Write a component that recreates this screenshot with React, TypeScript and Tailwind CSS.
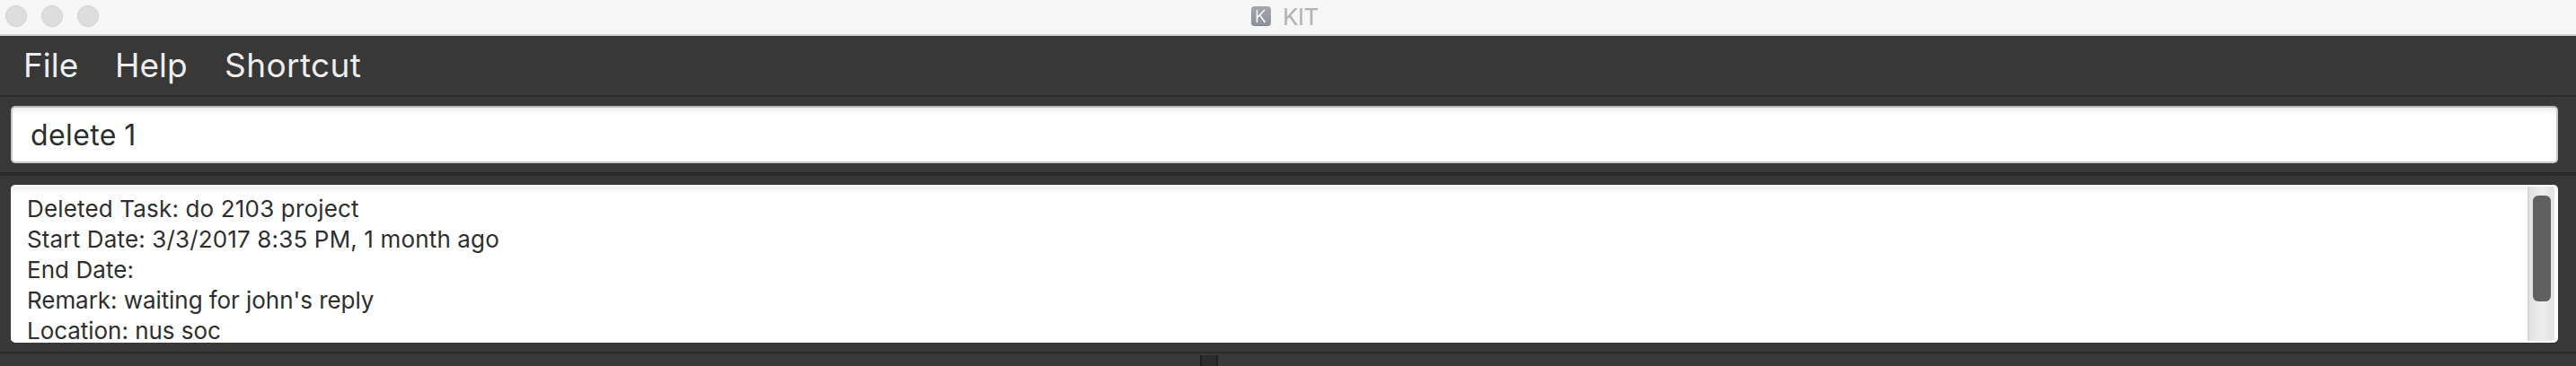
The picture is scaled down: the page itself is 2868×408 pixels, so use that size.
const menus = [
  { label: "File", className: "w-[102px]" },
  { label: "Help", className: "w-[122px]" },
  { label: "Shortcut", className: "tracking-[0.4px]" },
];

const resultLines = [
  { text: "Deleted Task: do 2103 project", className: "tracking-[0.16px]" },
  { text: "Start Date: 3/3/2017 8:35 PM, 1 month ago", className: "tracking-[0.15px]" },
  { text: "End Date:", className: "tracking-[0.05px]" },
  { text: "Remark: waiting for john's reply", className: "tracking-[-0.06px]" },
  { text: "Location: nus soc", className: "tracking-[-0.04px]" },
];

function TitleBar() {
  return (
    <header className="flex h-10 shrink-0 items-start border-b-2 border-[#d4d4d4] bg-[#f6f6f6]">
      <div className="flex w-[1393px] gap-4 pt-1.5 pl-1.5">
        {[0, 1, 2].map((i) => (
          <span key={i} className="size-6 rounded-full border border-[#cecece] bg-[#dddddd]" />
        ))}
      </div>
      <div className="mt-[7px] flex size-[22px] items-center justify-center rounded-[4px] border-b border-[#80828b] bg-linear-to-b from-[#a5a7b0] to-[#8f919b]">
        <svg viewBox="0 0 22 22" className="size-[22px]" fill="none" stroke="#ffffff" strokeWidth="1.5">
          <path d="M6.500 4v14M15 4l-8.200 8.500M9.500 9.700l6 8.300" />
        </svg>
      </div>
      <span className="ml-[13px] text-[26px] leading-[37px] tracking-[-0.5px] text-[#b3b3b3]">KIT</span>
    </header>
  );
}

function MenuBar() {
  return (
    <nav className="flex h-[68px] shrink-0 border-b-2 border-[#2a2a2a] pl-[26px] text-[37px] leading-[66px] text-[#eeeeee]">
      {menus.map((menu) => (
        <span key={menu.label} className={menu.className}>
          {menu.label}
        </span>
      ))}
    </nav>
  );
}

function CommandBox() {
  return (
    <section className="h-[88px] shrink-0 border-b-4 border-[#2a2a2a] pt-2.5 pr-5 pl-3">
      <div className="h-16 rounded-[5px] border-2 border-[#c8c8c8] border-t-[#b8b8b8] bg-linear-to-b from-[#ededed] to-white to-[8px] pl-5 text-[32px] leading-[61px] tracking-[0.4px] [word-spacing:-1px] text-[#2e2e2e]">
        delete 1
      </div>
    </section>
  );
}

function ResultDisplay() {
  return (
    <section className="h-[198px] shrink-0 border-b-2 border-[#2a2a2a] pt-2.5 pr-5 pl-3">
      <div className="flex h-44 overflow-hidden rounded-[5px] border-t-2 border-r-4 border-b-2 border-white bg-white">
        <div className="h-[174px] grow overflow-hidden bg-linear-to-b from-[#ededed] to-white to-[8px] pt-2 pl-[18px] text-[26px] leading-[33.9px] text-[#2e2e2e]">
          {resultLines.map((line) => (
            <p key={line.text} className="whitespace-nowrap">
              <span className={line.className}>{line.text}</span>
            </p>
          ))}
        </div>
        <div className="h-[172px] w-[30px] shrink-0 rounded-r-[3px] border-l-2 border-[#d5d5d5] bg-linear-to-r from-[#e2e2e2] via-[#ededed] to-[#e2e2e2] pt-2.5 pl-1">
          <div className="h-[118px] w-5 rounded-[6px] bg-[#606060]" />
        </div>
      </div>
    </section>
  );
}

export default function App() {
  return (
    <main className="flex h-[408px] w-[2868px] flex-col overflow-hidden bg-[#383838] font-['Inter',sans-serif]">
      <TitleBar />
      <MenuBar />
      <CommandBox />
      <ResultDisplay />
      <div className="flex grow justify-center pt-0.5 pr-[176px]">
        <div className="h-3 w-5 border-x-2 border-[#1e1e1e] bg-[#2b2b2b]" />
      </div>
    </main>
  );
}
